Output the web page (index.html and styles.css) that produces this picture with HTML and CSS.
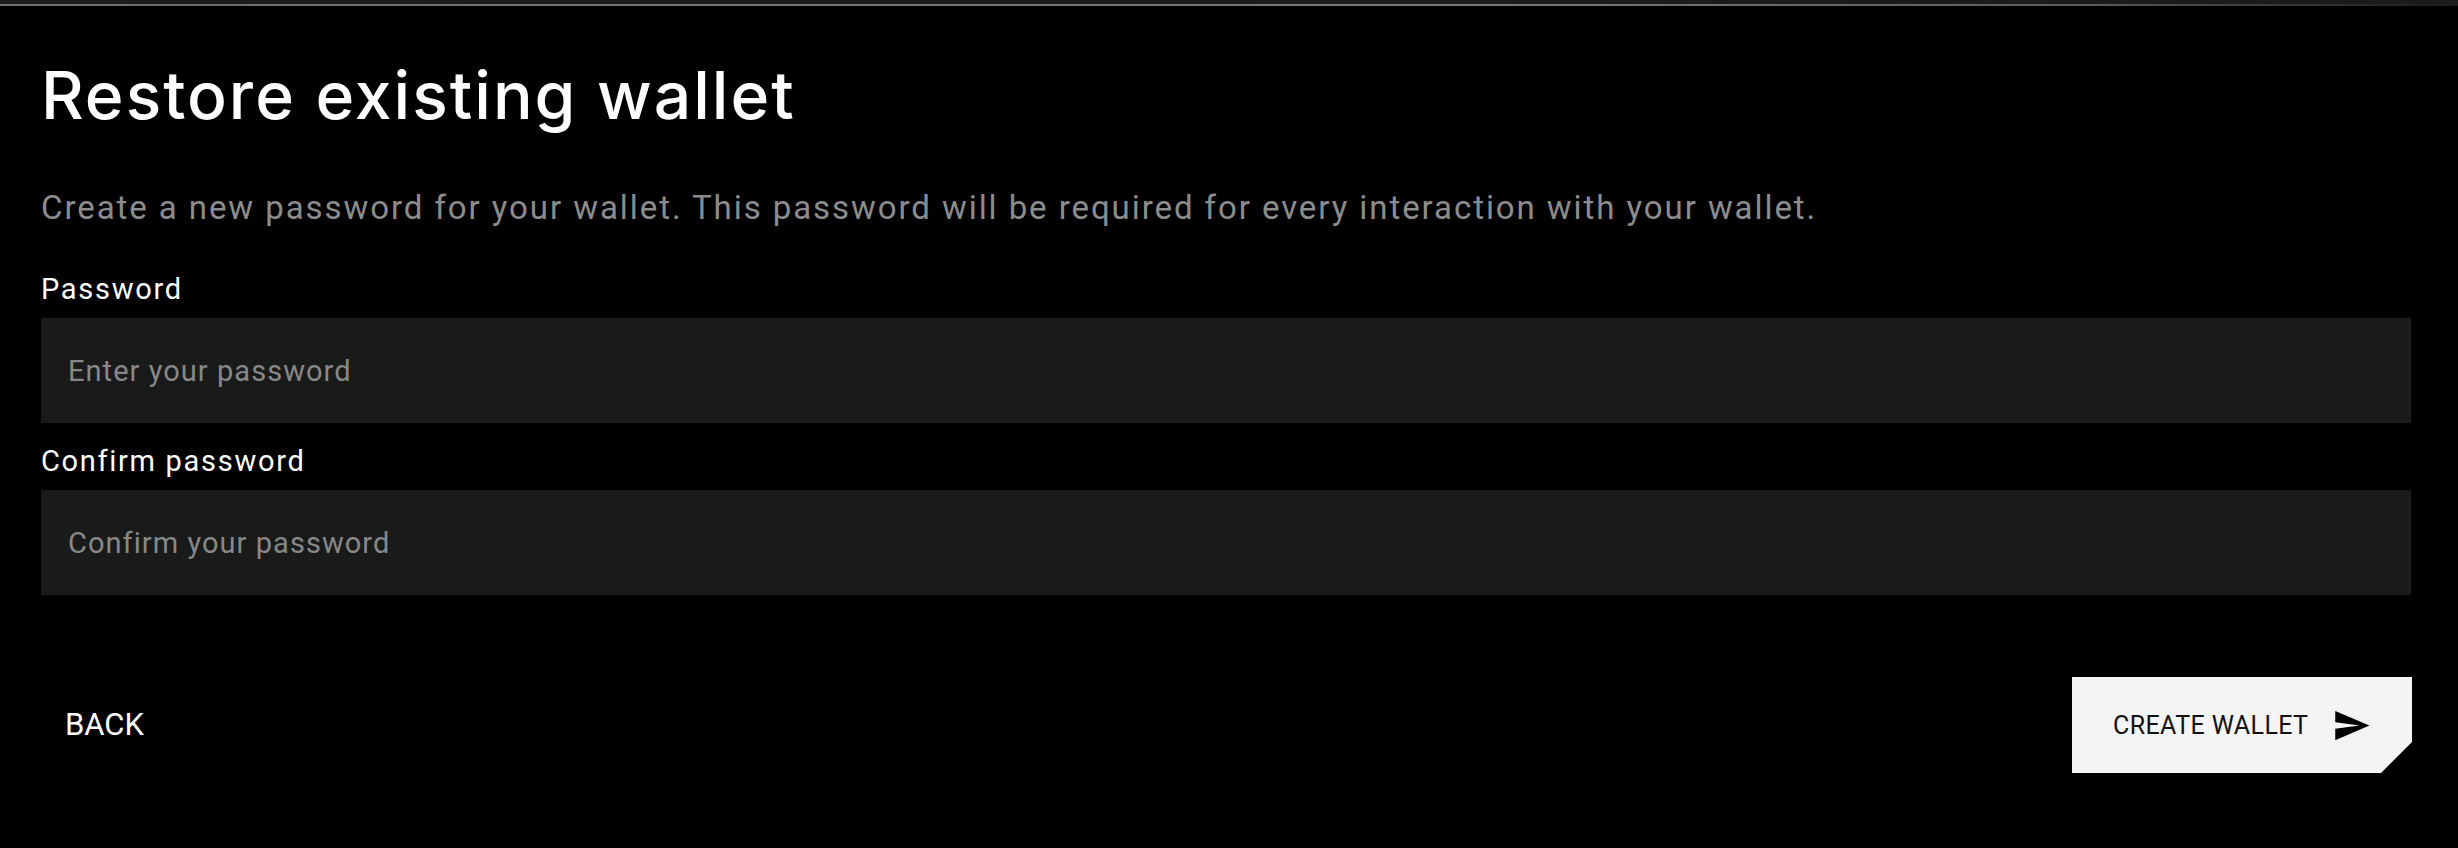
FILE: index.html
```html
<!DOCTYPE html>
<html lang="en">
<head>
<meta charset="utf-8">
<title>Restore existing wallet</title>
<link rel="stylesheet" href="styles.css">
</head>
<body>
<div class="topbar"><div class="topbar-line"></div></div>
<main class="page">
  <h1 class="title">Restore existing wallet</h1>
  <p class="desc">Create a new password for your wallet. This password will be required for every interaction with your wallet.</p>
  <form class="form">
    <label class="field">
      <span class="label">Password</span>
      <input class="input" type="password" placeholder="Enter your password">
    </label>
    <label class="field field-second">
      <span class="label">Confirm password</span>
      <input class="input" type="password" placeholder="Confirm your password">
    </label>
    <div class="actions">
      <button type="button" class="btn-back">BACK</button>
      <button type="button" class="btn-create">
        <span>CREATE WALLET</span>
        <svg class="send" viewBox="0 0 24 24" width="39" height="39" aria-hidden="true"><path d="M2.01 21L23 12 2.01 3 2 10l15 2-15 2z" fill="#000"/></svg>
      </button>
    </div>
  </form>
</main>
</body>
</html>
```

FILE: styles.css
```css
* { box-sizing: border-box; }
html, body { margin: 0; padding: 0; background: #000; }
body { font-family: Roboto, "Noto Sans", sans-serif; color: #fff; }

.topbar { height: 6px; background: #1b1b1b; display: flex; flex-direction: column; justify-content: flex-end; }
.topbar-line { height: 2px; background: linear-gradient(90deg, #6e6e6e 0%, #7a7a7a 60%, #5a5a5a 85%, #1b1b1b 100%); }

.page { padding: 0 47px 0 41px; }

.title {
  margin: 49px 0 0 0;
  font-family: Inter, "DejaVu Sans", sans-serif;
  font-weight: 500;
  font-size: 66px;
  line-height: 80px;
  letter-spacing: 2px;
}

.desc {
  margin: 53px 0 0 0;
  font-size: 33px;
  line-height: 40px;
  letter-spacing: 1.93px;
  color: #8c8c8c;
}

.form { margin: 44px 0 0 0; display: flex; flex-direction: column; }
.field { display: flex; flex-direction: column; gap: 12px; }
.field-second { margin-top: 21px; }
.label { font-size: 29px; line-height: 34px; letter-spacing: 1.7px; color: #fff; }
.input {
  height: 105px;
  border: 0;
  outline: none;
  background: #191a1a;
  padding: 0 27px;
  font-family: Roboto, "Noto Sans", sans-serif;
  font-size: 29px;
  line-height: 34px;
  letter-spacing: 1.05px;
  color: #fff;
}
.input::placeholder { color: #888; }

.actions { margin-top: 82px; display: flex; justify-content: space-between; align-items: center; }
.btn-back {
  background: none; border: 0; color: #fff; padding: 0 0 0 24px;
  font-family: Roboto, "Noto Sans", sans-serif; font-size: 31px; line-height: 36px;
}
.btn-create {
  width: 340px; height: 96px; border: 0;
  background: #f4f4f4; color: #111;
  display: flex; align-items: center;
  padding: 0 0 0 41px;
  font-family: Roboto, "Noto Sans", sans-serif; font-size: 25px;
  letter-spacing: 0.4px;
  clip-path: polygon(0 0, 100% 0, 100% 65px, 309px 100%, 0 100%);
  margin-right: -1px;
}
.send { margin-left: 24px; }
```
